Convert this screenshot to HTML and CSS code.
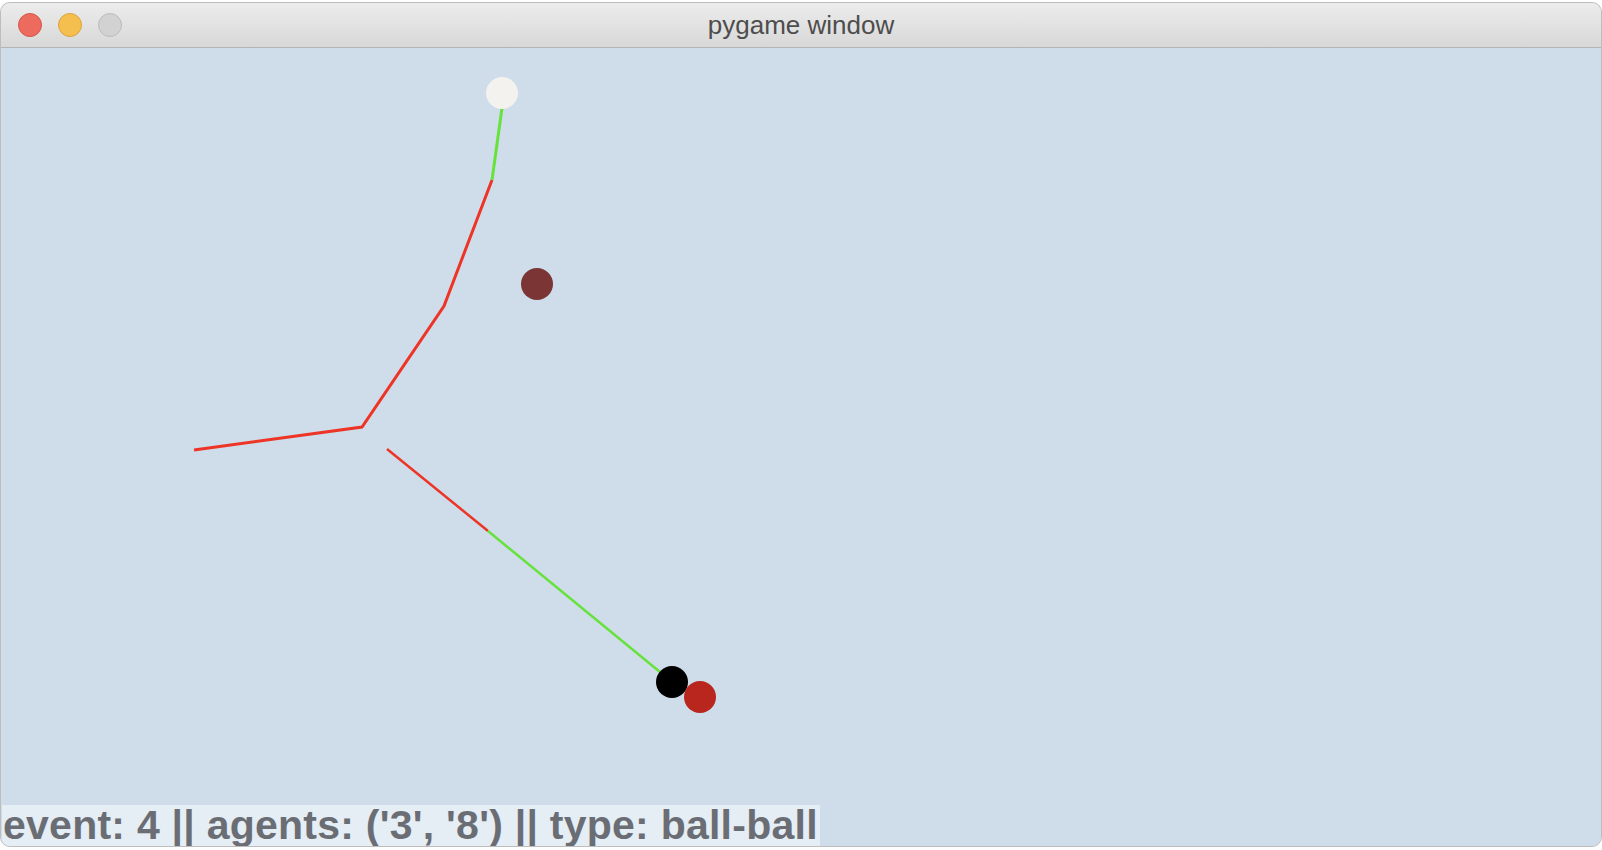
FILE: index.html
```html
<!DOCTYPE html>
<html>
<head>
<meta charset="utf-8">
<title>pygame window</title>
<link rel="stylesheet" href="styles.css">
</head>
<body>
<div class="window">
  <div class="titlebar">
    <div class="lights">
      <span class="light close"></span>
      <span class="light min"></span>
      <span class="light max"></span>
    </div>
    <div class="title">pygame window</div>
  </div>
  <div class="canvas">
    <svg class="scene" viewBox="1 48 1600 797" width="1600" height="797" xmlns="http://www.w3.org/2000/svg">
      <polyline points="492,180 444,306 362,427 194,450" fill="none" stroke="#ee3426" stroke-width="3" stroke-linejoin="miter"/>
      <line x1="502" y1="108" x2="492" y2="180" stroke="#67e23c" stroke-width="3"/>
      <line x1="387" y1="449" x2="488" y2="531" stroke="#ee3426" stroke-width="2.5"/>
      <line x1="488" y1="531" x2="660" y2="672" stroke="#67e23c" stroke-width="2.5"/>
      <circle cx="502" cy="93" r="16" fill="#f4f2ee"/>
      <circle cx="537" cy="284" r="16" fill="#7b3535"/>
      <circle cx="672" cy="682" r="16" fill="#000000"/>
      <circle cx="700" cy="697" r="16" fill="#b8261d"/>
    </svg>
    <div class="status">event: 4 || agents: ('3', '8') || type: ball-ball</div>
  </div>
</div>
</body>
</html>
```
FILE: styles.css
```css
html, body {
  margin: 0;
  padding: 0;
  background: #ffffff;
}
body {
  width: 1602px;
  height: 850px;
  overflow: hidden;
  padding-top: 2px;
  box-sizing: border-box;
}
.window {
  box-sizing: border-box;
  width: 1602px;
  height: 845px;
  border: 1px solid #bdbdbd;
  border-radius: 10px;
  overflow: hidden;
  display: flex;
  flex-direction: column;
  background: #cedde9;
}
.titlebar {
  position: relative;
  height: 44px;
  flex: none;
  background: linear-gradient(#ececec, #d8d8d8);
  border-bottom: 1px solid #b4b4b4;
  display: flex;
  align-items: center;
}
.lights {
  display: flex;
  gap: 16px;
  padding-left: 17px;
}
.light {
  box-sizing: border-box;
  width: 24px;
  height: 24px;
  border-radius: 50%;
  display: block;
}
.close { background: #ed6a5e; border: 1px solid #d4574b; }
.min { background: #f5bf4f; border: 1px solid #d9a43f; }
.max { background: #d2d2d2; border: 1px solid #bcbcbc; }
.title {
  position: absolute;
  left: 0;
  right: 0;
  top: 0;
  bottom: 0;
  display: flex;
  align-items: center;
  justify-content: center;
  font-family: "Liberation Sans", Arial, sans-serif;
  font-size: 26px;
  color: #4d4d4d;
}
.canvas {
  position: relative;
  flex: 1;
  background: #cedde9;
}
.scene {
  position: absolute;
  left: 0;
  top: 0;
  display: block;
}
.status {
  position: absolute;
  left: 1px;
  bottom: 0;
  width: 817px;
  height: 41px;
  background: #e5edf5;
  font-family: "Liberation Sans", Arial, sans-serif;
  font-weight: bold;
  font-size: 41px;
  line-height: 41px;
  letter-spacing: 0.25px;
  color: #6a6e74;
  white-space: nowrap;
  padding-left: 1px;
}
```
